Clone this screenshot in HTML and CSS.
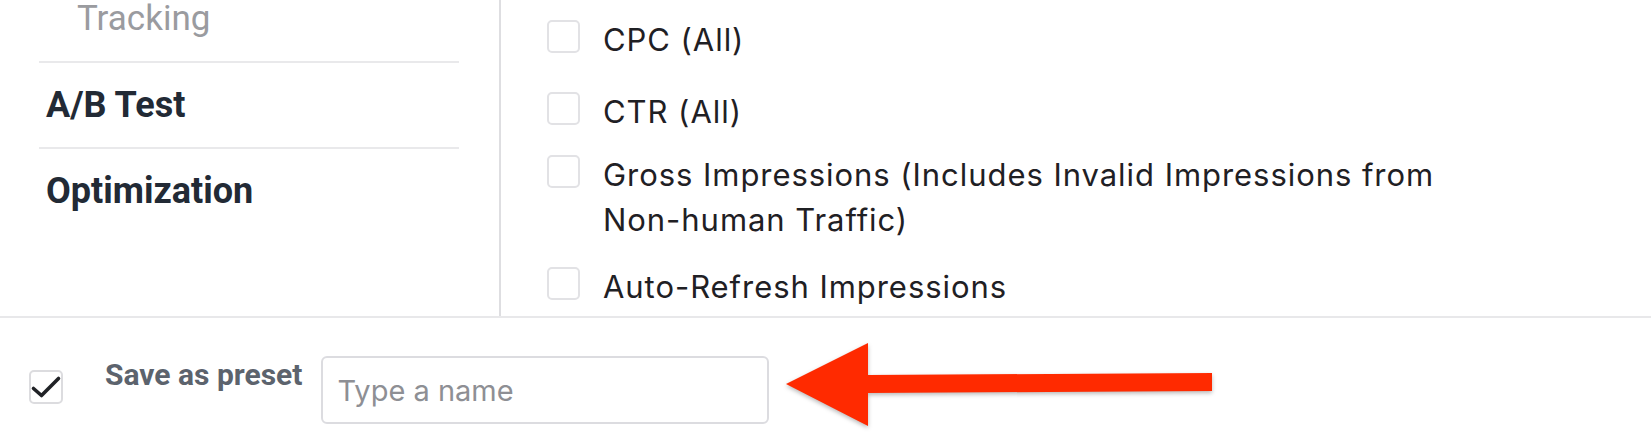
FILE: index.html
```html
<!DOCTYPE html>
<html lang="en">
<head>
<meta charset="utf-8">
<title>Columns</title>
<link rel="stylesheet" href="styles.css">
</head>
<body>
<div class="page">
  <div class="top">
    <aside class="sidebar">
      <ul class="nav">
        <li class="nav-item nav-item--sub">Tracking</li>
        <li class="nav-item">A/B Test</li>
        <li class="nav-item">Optimization</li>
      </ul>
    </aside>
    <section class="metrics">
      <label class="metric"><span class="box"></span><span class="metric-text">CPC (All)</span></label>
      <label class="metric metric--spaced"><span class="box"></span><span class="metric-text">CTR (All)</span></label>
      <label class="metric metric--tight"><span class="box"></span><span class="metric-text">Gross Impressions (Includes Invalid Impressions from<br>Non-human Traffic)</span></label>
      <label class="metric"><span class="box"></span><span class="metric-text">Auto-Refresh Impressions</span></label>
    </section>
  </div>
  <div class="footer">
    <span class="box box--checked">
      <svg viewBox="0 0 34 34" width="34" height="34" aria-hidden="true"><path d="M4.5 18.5 L12.5 25.5 L29.5 8.5" fill="none" stroke="#202226" stroke-width="3.6" stroke-linecap="round" stroke-linejoin="round"/></svg>
    </span>
    <span class="preset-label">Save as preset</span>
    <div class="name-input">Type a name</div>
  </div>
  <svg class="arrow" viewBox="0 0 445 96" width="445" height="96" aria-hidden="true">
    <polygon points="10,48 92,7 92,39 436,37 436,55 92,57 92,90" fill="#ff2a00"/>
  </svg>
</div>
</body>
</html>
```

FILE: styles.css
```css
* { box-sizing: border-box; }
html, body { margin: 0; padding: 0; background: #ffffff; }
.page {
  position: relative;
  width: 1651px;
  height: 441px;
  overflow: hidden;
  background: #ffffff;
}
.top {
  display: flex;
  height: 318px;
  border-bottom: 2px solid #e8e8ea;
}
.sidebar {
  width: 501px;
  flex: 0 0 501px;
  border-right: 2px solid #dedee1;
  padding-left: 39px;
}
.nav {
  list-style: none;
  margin: 0;
  padding: 0;
  width: 420px;
}
.nav-item {
  font-family: Roboto, "Liberation Sans", sans-serif;
  font-weight: 700;
  font-size: 36px;
  line-height: 44px;
  color: #222a35;
  padding: 20px 7px;
  border-top: 2px solid #e9e9eb;
}
.nav-item--sub {
  border-top: none;
  padding: 0 0 23px 38px;
  line-height: 38px;
  font-weight: 400;
  font-size: 35px;
  color: #9a9b9f;
}
.metrics {
  flex: 1;
  display: flex;
  flex-direction: column;
  gap: 22px;
  padding: 17px 0 0 46px;
}
.metric {
  display: flex;
  align-items: flex-start;
  gap: 23px;
  font-family: Inter, "Noto Sans", sans-serif;
  font-size: 31px;
  line-height: 45px;
  letter-spacing: 0.95px;
  color: #1f2024;
}
.metric--spaced { margin-top: 5px; }
.metric--tight { margin-top: -4px; }
.box {
  flex: 0 0 33px;
  width: 33px;
  height: 33px;
  margin-top: 3px;
  border: 2px solid #e2e2e5;
  border-radius: 5px;
  background: #ffffff;
}
.footer {
  display: flex;
  align-items: flex-start;
  padding: 38px 0 0 29px;
}
.box--checked {
  flex: 0 0 34px;
  width: 34px;
  height: 34px;
  margin-top: 14px;
  display: flex;
  align-items: center;
  justify-content: center;
  border-color: #dcdcdf;
}
.box--checked svg { display: block; margin: -2px; }
.preset-label {
  margin: 1px 0 0 42px;
  font-family: Roboto, "Liberation Sans", sans-serif;
  font-weight: 700;
  font-size: 30px;
  line-height: 36px;
  color: #5c636d;
}
.name-input {
  margin-left: 19px;
  width: 448px;
  height: 68px;
  border: 2px solid #dcdce0;
  border-radius: 6px;
  padding-left: 14px;
  display: flex;
  align-items: center;
  font-family: Inter, "Noto Sans", sans-serif;
  font-size: 29px;
  color: #8e8f94;
}
.arrow {
  position: absolute;
  left: 776px;
  top: 336px;
  filter: drop-shadow(0 2px 2px rgba(0, 0, 0, 0.28));
}
```
